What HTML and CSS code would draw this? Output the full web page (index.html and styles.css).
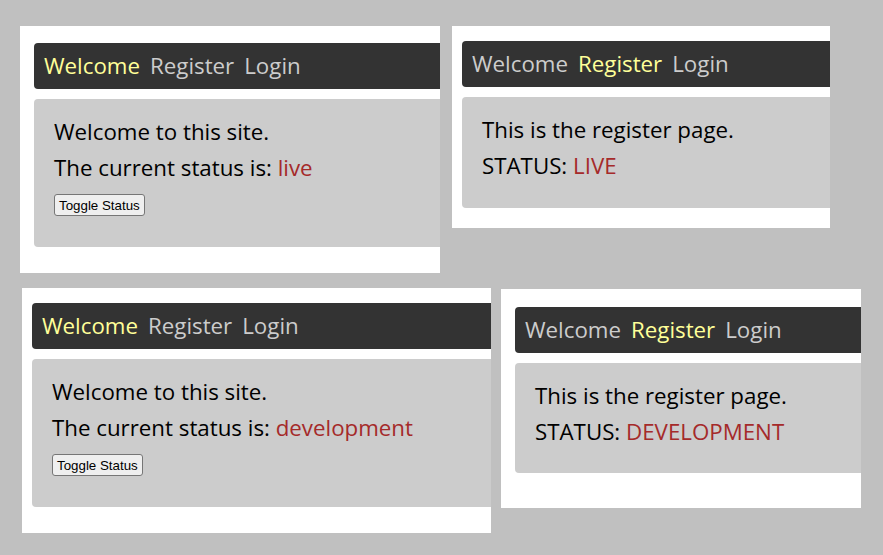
FILE: index.html
```html
<!DOCTYPE html>
<html>
<head>
<meta charset="utf-8">
<link rel="stylesheet" href="styles.css">
</head>
<body>
<div class="canvas">
  <section class="shot shot-1">
    <nav class="nav">
      <a class="link active">Welcome</a>
      <a class="link">Register</a>
      <a class="link">Login</a>
    </nav>
    <main class="content content-welcome">
      <div class="line">Welcome to this site.</div>
      <div class="line">The current status is: <span class="status">live</span></div>
      <button class="btn">Toggle Status</button>
    </main>
  </section>

  <section class="shot shot-2">
    <nav class="nav">
      <a class="link">Welcome</a>
      <a class="link active">Register</a>
      <a class="link">Login</a>
    </nav>
    <main class="content content-register">
      <div class="line">This is the register page.</div>
      <div class="line">STATUS: <span class="status">LIVE</span></div>
    </main>
  </section>

  <section class="shot shot-3">
    <nav class="nav">
      <a class="link active">Welcome</a>
      <a class="link">Register</a>
      <a class="link">Login</a>
    </nav>
    <main class="content content-welcome">
      <div class="line">Welcome to this site.</div>
      <div class="line">The current status is: <span class="status">development</span></div>
      <button class="btn">Toggle Status</button>
    </main>
  </section>

  <section class="shot shot-4">
    <nav class="nav">
      <a class="link">Welcome</a>
      <a class="link active">Register</a>
      <a class="link">Login</a>
    </nav>
    <main class="content content-register">
      <div class="line">This is the register page.</div>
      <div class="line">STATUS: <span class="status">DEVELOPMENT</span></div>
    </main>
  </section>
</div>
</body>
</html>
```

FILE: styles.css
```css
* { box-sizing: border-box; }

html, body {
  margin: 0;
  padding: 0;
  background: #c0c0c0;
}

.canvas {
  position: relative;
  width: 883px;
  height: 555px;
  overflow: hidden;
}

.shot {
  position: absolute;
  background: #ffffff;
  overflow: hidden;
  display: flex;
  flex-direction: column;
  gap: 10px;
  font-family: "Open Sans", "Noto Sans", sans-serif;
}

.shot-1 { left: 20px;  top: 26px;  width: 420px; height: 247px; padding: 17px 0 0 14px; }
.shot-2 { left: 452px; top: 26px;  width: 378px; height: 202px; padding: 15px 0 0 10px; }
.shot-3 { left: 22px;  top: 288px; width: 469px; height: 245px; padding: 15px 0 0 10px; }
.shot-4 { left: 501px; top: 289px; width: 360px; height: 219px; padding: 18px 0 0 14px; }

.nav {
  display: flex;
  align-items: center;
  gap: 10px;
  height: 46px;
  width: 600px;
  flex-shrink: 0;
  padding: 0 10px;
  background: #333333;
  border-radius: 4px;
}

.link {
  font-size: 22.3px;
  color: #cccccc;
  text-decoration: none;
  line-height: 1;
}

.link.active {
  color: #ffff99;
}

.content {
  width: 600px;
  flex-shrink: 0;
  background: #cccccc;
  border-radius: 4px;
  padding: 15px 20px 0 20px;
  color: #000000;
  font-size: 22.3px;
}

.content-welcome { height: 148px; }
.content-register { height: 111px; }
.shot-4 .content-register { height: 110px; }

.line {
  line-height: 36px;
  white-space: nowrap;
}

.status {
  color: #a52a2a;
}

.btn {
  display: block;
  margin-top: 8px;
  height: 22px;
  padding: 1px 4px;
  font-family: "Liberation Sans", Arial, sans-serif;
  font-size: 13.33px;
  color: #000000;
  background: #efefef;
  border: 1px solid #767676;
  border-radius: 3px;
}
```
